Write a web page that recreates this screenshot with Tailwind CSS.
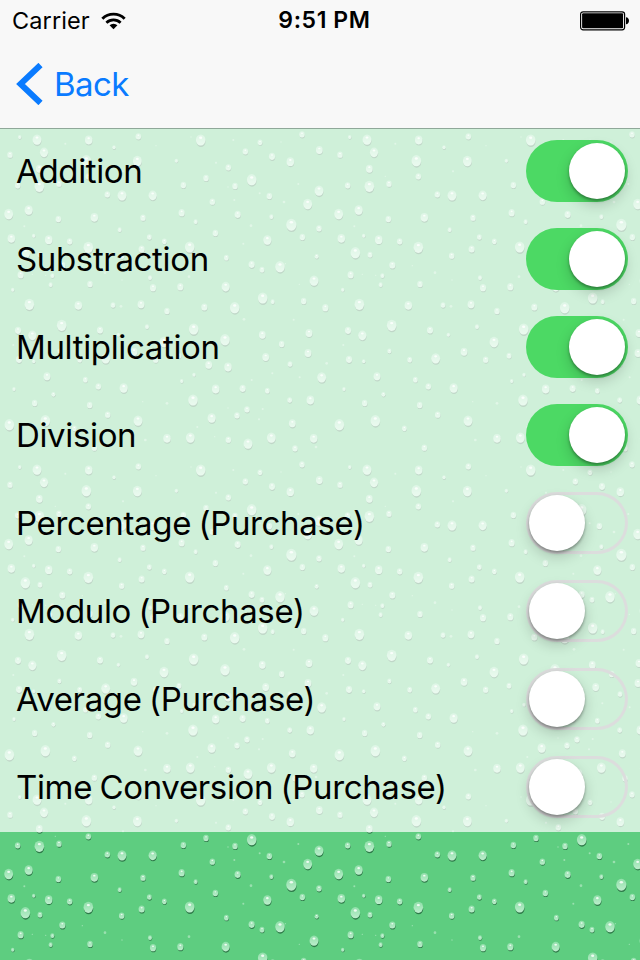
<!DOCTYPE html>
<html lang="en">

<head>
    <meta charset="UTF-8">
    <meta name="viewport" content="width=device-width, initial-scale=1.0">
    <script src="https://cdn.jsdelivr.net/npm/@tailwindcss/browser@4"></script>
    <title>Settings</title>
</head>

<body class="w-[640px] h-[960px] overflow-hidden flex flex-col bg-[#5ecd80] font-['Inter','Liberation_Sans',sans-serif] text-black">

    <header class="h-32 shrink-0 bg-[#f8f8f8]">
        <div class="h-[41px] grid grid-cols-3 items-center pl-3 pr-[11px]">
            <div class="flex items-center gap-[11px]">
                <span class="text-[23.5px] leading-[41px] tracking-[0.1px]">Carrier</span>
                <svg class="w-[25px] h-[18px]" viewBox="0 0 26 18" fill="none" stroke="#000">
                    <path d="M1.4 6.7a16.4 16.4 0 0 1 23.2 0" stroke-width="3" />
                    <path d="M5.6 10.9a10.5 10.5 0 0 1 14.8 0" stroke-width="2.8" />
                    <path d="M13 17.6l-4.1-4.1a5.8 5.8 0 0 1 8.2 0z" fill="#000" stroke="none" />
                </svg>
            </div>
            <span class="text-center text-[23px] leading-[41px] tracking-[0.6px] font-semibold pl-[8px] whitespace-nowrap">9:51 PM</span>
            <svg class="w-[50px] h-[20px] justify-self-end translate-x-px" viewBox="0 0 50 20">
                <rect x="0.6" y="0.8" width="44" height="18" rx="2.5" fill="#fff" stroke="#000" stroke-width="1.2" />
                <rect x="2.1" y="2.3" width="41" height="15" rx="1" />
                <path d="M46 6.3c4 .3 4 6.7 0 7z" />
            </svg>
        </div>
        <a href="#" class="h-[86px] flex items-center gap-[11px] pl-4 text-[#0a7bff]">
            <svg class="w-[27px] h-[42px]" viewBox="0 0 27 42" fill="none" stroke="currentColor" stroke-width="6">
                <path d="M24.5 2L4.5 21l20 19" />
            </svg>
            <span class="text-[33px] leading-[86px] tracking-[-0.6px]">Back</span>
        </a>
    </header>

    <main class="relative flex-1">
        <svg class="absolute inset-0 w-full h-full" aria-hidden="true">
            <defs>
                <linearGradient id="drop" x1="0" y1="0" x2="0" y2="1">
                    <stop offset="0" stop-color="#8fdfa9" />
                    <stop offset="1" stop-color="#bdeecd" />
                </linearGradient>
                <pattern id="rain" width="990" height="990" patternUnits="userSpaceOnUse" patternTransform="scale(0.33333)"></pattern>
            </defs>
            <rect width="640" height="832" fill="url(#rain)" />
        </svg>
        <ul id="operations" class="relative bg-white/70 border-t border-[#8fa899]"></ul>
    </main>

    <script>
        // water drops of one background tile: x, y, radius
        const drops = [
            [59,28,5],[111,36,13],[266,37,11],[196,47,3],[132,74,12],[30,81,8],[415,26,8],[342,59,5],[468,53,2],
            [602,37,14],[573,27,2],[700,36,3],[780,44,7],[906,20,8],[843,42,2],[736,71,8],[816,86,9],[871,102,11],
            [958,67,10],[259,99,14],[412,100,13],[529,99,5],[369,130,3],[648,104,3],[685,119,8],[118,123,10],
            [265,146,8],[618,151,8],[755,156,14],[550,172,8],[705,175,8],[53,173,8],[118,176,14],[177,168,8],
            [166,145,2],[322,200,8],[366,203,13],[458,203,12],[808,205,8],[779,196,3],[895,168,3],[684,177,2],
            [703,216,3],[852,222,4],[923,229,13],[957,189,13],[637,222,8],[86,247,12],[26,259,13],[175,274,8],
            [283,269,11],[429,270,8],[545,255,9],[587,282,6],[713,260,9],[814,267,6],[753,293,4],[874,291,15],
            [957,302,8],[907,328,8],[802,337,12],[646,316,8],[730,347,3],[359,306,6],[448,328,7],[493,341,7],
            [425,364,9],[365,384,8],[569,358,14],[265,359,14],[209,341,8],[146,336,11],[101,324,5],[73,295,3],
            [34,332,11],[76,375,14],[120,381,7],[187,412,9],[247,413,2],[315,434,4],[366,456,2],[62,441,9],
            [97,439,2],[137,442,2],[157,444,6],[152,471,6],[38,486,5],[270,469,8],[450,450,6],[459,480,9],
            [541,477,9],[567,446,4],[677,477,12],[679,390,7],[755,410,9],[786,426,7],[840,417,14],[856,407,2],
            [950,386,6],[942,459,13],[898,469,2],[88,530,14],[235,533,11],[339,532,7],[363,535,4],[423,530,10],
            [501,550,8],[613,538,9],[704,540,14],[788,511,14],[818,522,6],[911,520,8],[976,540,9],[732,574,4],
            [881,575,3],[185,593,14],[300,607,9],[54,608,9],[97,623,12],[441,597,6],[581,604,14],[675,636,14],
            [787,621,10],[845,649,8],[927,616,10],[924,676,10],[797,688,10],[870,709,7],[355,621,5],[40,651,3],
            [817,736,3],[626,711,10],[684,718,11],[582,741,5],[545,760,5],[899,748,3],[755,756,3],[141,746,10],
            [256,756,7],[492,643,13],[402,672,10],[537,684,7],[178,670,6],[57,695,9],[101,701,5],[239,696,7],
            [317,692,13],[467,696,8],[980,706,4],[965,749,13],[42,784,5],[160,800,6],[104,826,8],[295,776,8],
            [371,781,12],[269,832,8],[428,821,2],[501,826,4],[579,817,14],[647,784,11],[728,782,9],[802,789,7],
            [931,817,11],[869,817,7],[741,845,8],[711,863,8],[635,871,12],[684,840,2],[788,843,3],[777,874,3],
            [877,887,10],[323,861,8],[414,879,13],[136,879,14],[28,891,14],[223,902,7],[436,936,4],[501,932,11],
            [571,930,13],[592,897,3],[644,926,2],[685,936,8],[744,948,13],[814,930,13],[941,932,11],[283,960,8],
            [885,962,8],[948,957,4]
        ];

        document.getElementById("rain").innerHTML = drops.map(([x, y, r]) => r < 5
            ? `<circle cx="${x}" cy="${y}" r="${r}" fill="#9ae0af" />`
            : `<ellipse cx="${x + 1}" cy="${y + r * 0.3}" rx="${r * 0.98}" ry="${r * 1.12}" fill="#1d5c35" fill-opacity="0.75" />
               <ellipse cx="${x}" cy="${y - 1}" rx="${r * 1.02}" ry="${r * 1.2}" fill="url(#drop)" />
               <ellipse cx="${x}" cy="${y - r * 0.55}" rx="${r * 0.34}" ry="${r * 0.26}" fill="#effbf2" />`
        ).join("");

        const operations = [
            { name: "Addition", on: true },
            { name: "Substraction", on: true },
            { name: "Multiplication", on: true },
            { name: "Division", on: true },
            { name: "Percentage (Purchase)", on: false },
            { name: "Modulo (Purchase)", on: false },
            { name: "Average (Purchase)", on: false },
            { name: "Time Conversion (Purchase)", on: false }
        ];

        document.getElementById("operations").innerHTML = operations.map(({ name, on }) => `
            <li class="h-[88px] first:h-[87px] first:*:-mt-px flex items-center justify-between pl-4 pr-3">
                <span class="text-[33px] leading-[44px] pb-[2px] tracking-[-0.35px] [word-spacing:-1.5px] whitespace-nowrap">${name}</span>
                <button role="switch" aria-checked="${on}" aria-label="${name}"
                    class="w-[102px] h-[62px] mb-[2px] rounded-full flex items-center p-[3px] ${on
                        ? "bg-[#4cd964] justify-end"
                        : "shadow-[inset_0_0_0_3px_#dcdddd] justify-start"}">
                    <span class="size-14 rounded-full bg-white shadow-[0_6px_14px_rgba(0,0,0,0.18),0_2px_3px_rgba(0,0,0,0.32)]"></span>
                </button>
            </li>`).join("");
    </script>

</body>

</html>
